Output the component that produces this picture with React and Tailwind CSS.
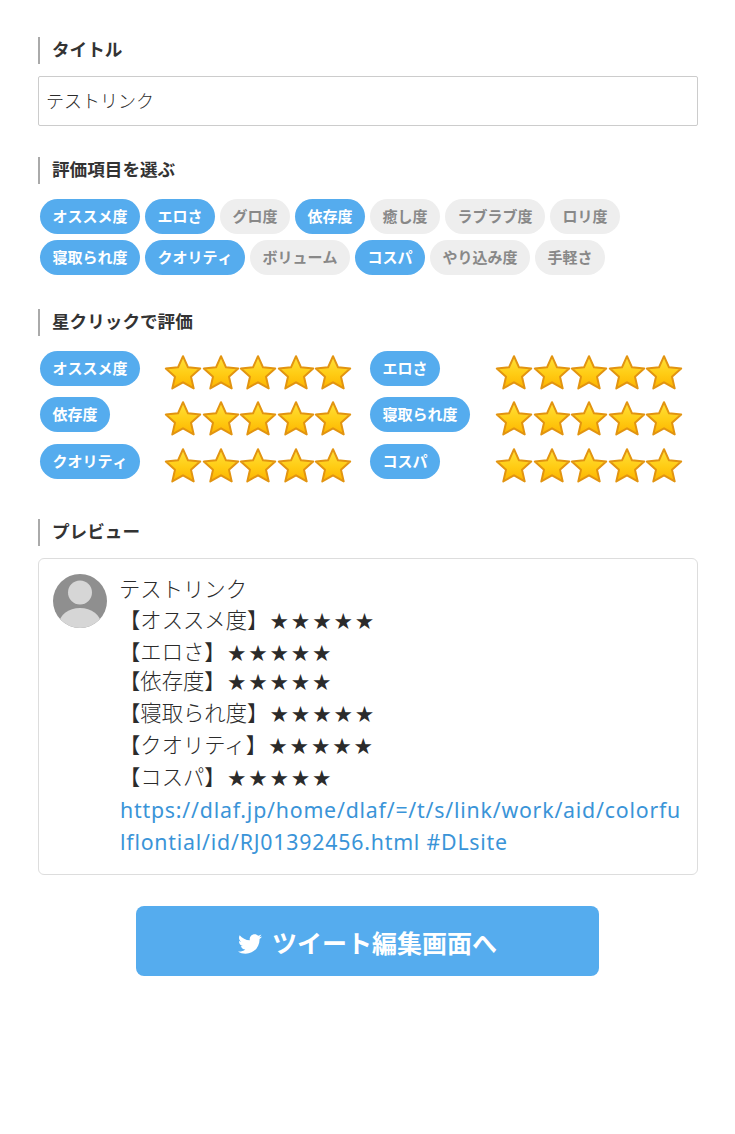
import { FaTwitter } from "react-icons/fa";

const chipRows = [
  [
    ["オススメ度", true],
    ["エロさ", true],
    ["グロ度", false],
    ["依存度", true],
    ["癒し度", false],
    ["ラブラブ度", false],
    ["ロリ度", false],
  ],
  [
    ["寝取られ度", true],
    ["クオリティ", true],
    ["ボリューム", false],
    ["コスパ", true],
    ["やり込み度", false],
    ["手軽さ", false],
  ],
];

const ratingRows = [
  { label: "オススメ度", right: "エロさ", mb: "mb-[11px]" },
  { label: "依存度", right: "寝取られ度", mb: "mb-[12px]" },
  { label: "クオリティ", right: "コスパ", mb: "" },
];

const previewLines = [
  { text: "【オススメ度】", h: "h-[32px]" },
  { text: "【エロさ】", h: "h-[29px]" },
  { text: "【依存度】", h: "h-[32px]" },
  { text: "【寝取られ度】", h: "h-[32px]" },
  { text: "【クオリティ】", h: "h-[32px]" },
  { text: "【コスパ】", h: "h-[33px]" },
];

function Heading({ children }) {
  return (
    <h2 className="h-[27px] border-l-2 border-[#aaaaaa] pl-3 text-[17.6px] font-bold leading-[25px] text-[#333333]">
      {children}
    </h2>
  );
}

function Chip({ active = true, children }) {
  return (
    <span
      className={`inline-block h-[35px] rounded-full px-[12.5px] text-[15px] font-bold leading-[34px] whitespace-nowrap [font-kerning:none] ${
        active ? "bg-[#55acee] text-white" : "bg-[#eeeeee] text-[#888888]"
      }`}
    >
      {children}
    </span>
  );
}

function Star({ id }) {
  return (
    <svg viewBox="0 0 38 36" className="h-[36px] w-[38px] shrink-0">
      <defs>
        <linearGradient id={id} x1="0" y1="0" x2="0" y2="1">
          <stop offset="0" stopColor="#ffe13a" />
          <stop offset="0.55" stopColor="#ffcc14" />
          <stop offset="1" stopColor="#fdb400" />
        </linearGradient>
      </defs>
      <path
        d="M19 2.2 L24 13.3 L36.2 14.6 L27 22.7 L29.7 34.4 L19 28.3 L8.3 34.4 L11 22.7 L1.8 14.6 L14 13.3 Z"
        fill={`url(#${id})`}
        stroke="#e29410"
        strokeWidth="2"
        strokeLinejoin="round"
      />
    </svg>
  );
}

function Stars({ name }) {
  return (
    <div className="flex h-[35px] w-[205px] pt-[3px]">
      {[0, 1, 2, 3, 4].map((i) => (
        <div key={i} className="w-[37.6px]">
          <Star id={`${name}-${i}`} />
        </div>
      ))}
    </div>
  );
}

function Avatar() {
  return (
    <svg viewBox="0 0 54 54" className="h-[54px] w-[54px] shrink-0">
      <defs>
        <clipPath id="avatar-clip">
          <circle cx="27" cy="27" r="27" />
        </clipPath>
      </defs>
      <circle cx="27" cy="27" r="27" fill="#8f8f8f" />
      <g clipPath="url(#avatar-clip)" fill="#d6d6d6">
        <circle cx="27" cy="18.5" r="12" />
        <ellipse cx="27" cy="50" rx="21" ry="16" />
      </g>
    </svg>
  );
}

export default function App() {
  return (
    <div
      className="min-h-[1134px] bg-white pl-[38px] pr-[37px] pt-[37px] text-[#333333]"
      style={{ fontFamily: '"Noto Sans", "Noto Sans CJK JP", sans-serif' }}
    >
      <Heading>タイトル</Heading>
      <input
        readOnly
        value="テストリンク"
        className="mt-3 block h-[50px] w-full rounded-[2px] border border-[#cccccc] pl-[7px] pr-2 pb-[3px] text-[18px] font-light text-[#2b2b2b] outline-none"
      />

      <div className="mt-[31px]">
        <Heading>評価項目を選ぶ</Heading>
      </div>
      <div className="mt-[15px] flex flex-col gap-[6px] pl-[2px]">
        {chipRows.map((row, i) => (
          <div key={i} className="flex gap-[5px]">
            {row.map(([label, active]) => (
              <Chip key={label} active={active}>
                {label}
              </Chip>
            ))}
          </div>
        ))}
      </div>

      <div className="mt-[34px]">
        <Heading>星クリックで評価</Heading>
      </div>
      <div className="mt-[15px] pl-[2px]">
        {ratingRows.map((row, i) => (
          <div key={row.label} className={`flex h-[35px] ${row.mb}`}>
            <div className="flex w-[330px] shrink-0">
              <div className="w-[124px] shrink-0">
                <Chip>{row.label}</Chip>
              </div>
              <Stars name={`l${i}`} />
            </div>
            <div className="flex">
              <div className="w-[125px] shrink-0">
                <Chip>{row.right}</Chip>
              </div>
              <Stars name={`r${i}`} />
            </div>
          </div>
        ))}
      </div>

      <div className="mt-[40px]">
        <Heading>プレビュー</Heading>
      </div>
      <div className="mt-3 flex h-[317px] gap-[12px] rounded-[6px] border border-[#dddddd] pt-[15px] pl-[14px] pr-[14px]">
        <Avatar />
        <div className="min-w-0 flex-1 text-[21.33px] font-light text-[#2b2b2b]">
          <div className="h-[30px] leading-[30px]">テストリンク</div>
          {previewLines.map((line) => (
            <div key={line.text} className={`${line.h} leading-[32px] whitespace-nowrap`}>
              {line.text}
              <span
                style={{ fontFamily: '"Noto Sans CJK JP", sans-serif' }}
                className="ml-[2px] text-[18px] font-normal tracking-[3.3px]"
              >
                ★★★★★
              </span>
            </div>
          ))}
          <div className="ml-px font-normal leading-[32px] whitespace-nowrap tracking-[0.78px] text-[#3a94d8]">
            https://dlaf.jp/home/dlaf/=/t/s/link/work/aid/colorfu
            <br />
            lflontial/id/RJ01392456.html #DLsite
          </div>
        </div>
      </div>

      <div className="mt-[31px] mr-px flex justify-center">
        <button className="flex h-[70px] w-[463px] items-center justify-center gap-[10px] rounded-[8px] bg-[#55acee] pt-[5px] text-[25px] font-bold text-white">
          <FaTwitter className="h-6 w-6" />
          ツイート編集画面へ
        </button>
      </div>
    </div>
  );
}
